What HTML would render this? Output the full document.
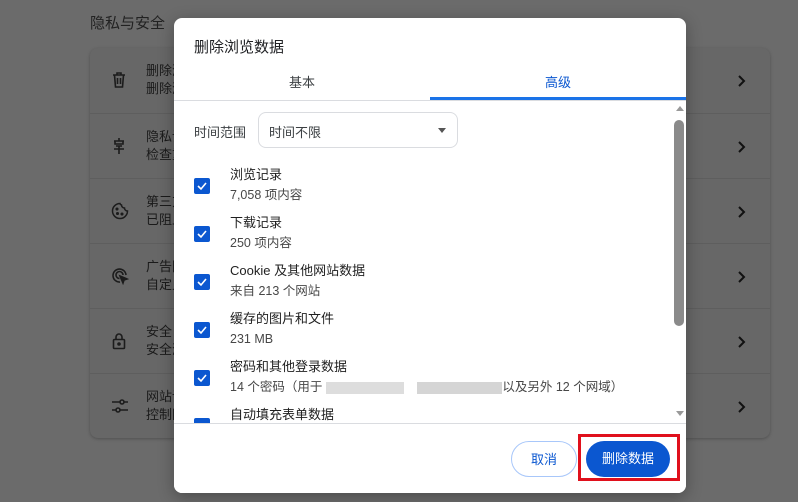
<!DOCTYPE html>
<html><head><meta charset="utf-8"><style>
*{margin:0;padding:0;box-sizing:border-box}
body{width:798px;height:502px;overflow:hidden;background:#6b6b6b;font-family:"Liberation Sans","Noto Sans CJK SC",sans-serif;position:relative}
.a{position:absolute}
.h{left:90px;top:12px;font-size:15px;color:#222}
.card{left:90px;top:48px;width:680px;height:390px;background:#676767;border-radius:8px;box-shadow:0 1px 3px rgba(0,0,0,.25)}
.row{position:absolute;left:0;width:680px;height:65px;border-top:1px solid #5e5e5e}
.row svg.ic{position:absolute;left:21px;top:23px}
.row .t{position:absolute;left:56px;top:14px;font-size:13px;color:#1a1a1a;line-height:18px}
.row svg.c{position:absolute;left:647px;top:27px}
.dlg{left:174px;top:18px;width:512px;height:475px;background:#fff;border-radius:8px;box-shadow:0 4px 16px rgba(0,0,0,.3);overflow:hidden}
.title{left:20px;top:18px;font-size:15px;color:#202124}
.tab{top:54px;font-size:13px;color:#3c4043;width:256px;text-align:center}
.ul{left:256px;top:79px;width:256px;height:3px;background:#1a73e8}
.sep{left:0;top:82px;width:512px;height:1px;background:#dadce0}
.lbl{left:20px;top:104px;font-size:13px;color:#3c4043}
.sel{left:84px;top:94px;width:200px;height:36px;border:1px solid #dadce0;border-radius:8px;font-size:13px;color:#3c4043;padding:9px 10px}
.sel:after{content:"";position:absolute;right:11px;top:15px;border:4px solid transparent;border-top:5px solid #555}
.cb{left:20px;width:16px;height:16px;background:#0b57d0;border-radius:2px}
.cb svg{position:absolute;left:2px;top:2px}
.it{left:56px;font-size:13px;color:#1f1f1f;line-height:20px}
.it span{color:#474747;font-size:12.5px}
.sb{left:500px;top:102px;width:10px;height:206px;background:#8a8a8a;border-radius:5px}
.bsep{left:0;top:405px;width:512px;height:1px;background:#dadce0}
.btn{top:423px;height:36px;border-radius:18px;font-size:13px;text-align:center;line-height:36px}
</style></head><body>
<div class="a h">隐私与安全</div>
<div class="a card">
<div class="row" style="top:0;border-top:none"><svg class="ic" width="16" height="18" fill="none" stroke="#1c1c1c" stroke-width="1.6"><path d="M2 4h12M6 4V2h4v2M3.5 4l1 12h7l1-12M6.5 7v6M9.5 7v6"/></svg><div class="t">删除浏<br>删除浏</div><svg class="c" width="10" height="12" fill="none" stroke="#111" stroke-width="2"><path d="M2 1l5 5-5 5"/></svg></div>
<div class="row" style="top:65px"><svg class="ic" width="16" height="18" fill="none" stroke="#1c1c1c" stroke-width="1.6"><path d="M8 1v3M3 4h10M4 4v3h8V4M5 9h6M3 12h10M8 9v8"/></svg><div class="t">隐私设<br>检查重</div><svg class="c" width="10" height="12" fill="none" stroke="#111" stroke-width="2"><path d="M2 1l5 5-5 5"/></svg></div>
<div class="row" style="top:130px"><svg class="ic" width="18" height="18" fill="none" stroke="#1c1c1c" stroke-width="1.5"><path d="M9 1.5a7.5 7.5 0 1 0 7.5 7.5 3 3 0 0 1-3-3 3 3 0 0 1-3-3 2 2 0 0 1-1.5-1.5z"/><circle cx="6" cy="7" r=".8" fill="#1c1c1c"/><circle cx="6.5" cy="11.5" r=".8" fill="#1c1c1c"/><circle cx="11" cy="12" r=".8" fill="#1c1c1c"/></svg><div class="t">第三方<br>已阻止</div><svg class="c" width="10" height="12" fill="none" stroke="#111" stroke-width="2"><path d="M2 1l5 5-5 5"/></svg></div>
<div class="row" style="top:195px"><svg class="ic" width="18" height="18" fill="none" stroke="#1c1c1c" stroke-width="1.6"><path d="M15 8a6.5 6.5 0 1 0-6 7"/><path d="M12 8a3.5 3.5 0 1 0-3.5 3.5"/><path d="M9 9l7 3-3 1-1 3z" fill="#1c1c1c"/></svg><div class="t">广告隐<br>自定义</div><svg class="c" width="10" height="12" fill="none" stroke="#111" stroke-width="2"><path d="M2 1l5 5-5 5"/></svg></div>
<div class="row" style="top:260px"><svg class="ic" width="16" height="18" fill="none" stroke="#1c1c1c" stroke-width="1.6"><rect x="2.5" y="7.5" width="11" height="9" rx="1"/><path d="M5 7.5V5a3 3 0 0 1 6 0v2.5"/><circle cx="8" cy="12" r="1" fill="#1c1c1c"/></svg><div class="t">安全<br>安全浏</div><svg class="c" width="10" height="12" fill="none" stroke="#111" stroke-width="2"><path d="M2 1l5 5-5 5"/></svg></div>
<div class="row" style="top:325px"><svg class="ic" width="18" height="18" fill="none" stroke="#1c1c1c" stroke-width="1.6"><path d="M1 5h8M13 5h4M1 13h4M9 13h8"/><circle cx="11" cy="5" r="2"/><circle cx="7" cy="13" r="2"/></svg><div class="t">网站设<br>控制网</div><svg class="c" width="10" height="12" fill="none" stroke="#111" stroke-width="2"><path d="M2 1l5 5-5 5"/></svg></div>
</div>
<div class="a dlg">
<div class="a title">删除浏览数据</div>
<div class="a tab" style="left:0">基本</div>
<div class="a tab" style="left:256px;color:#0b57d0">高级</div>
<div class="a sep"></div><div class="a ul"></div>
<div class="a" style="left:502px;top:88px;border:4px solid transparent;border-bottom:5px solid #999;border-top:none"></div>
<div class="a lbl">时间范围</div>
<div class="a sel">时间不限</div>
<div class="a cb" style="top:160px"><svg width="12" height="12"><path d="M2 6l3 3 5-6" stroke="#fff" stroke-width="1.6" fill="none"/></svg></div>
<div class="a it" style="top:147px">浏览记录<br><span>7,058 项内容</span></div>
<div class="a cb" style="top:208px"><svg width="12" height="12"><path d="M2 6l3 3 5-6" stroke="#fff" stroke-width="1.6" fill="none"/></svg></div>
<div class="a it" style="top:195px">下载记录<br><span>250 项内容</span></div>
<div class="a cb" style="top:256px"><svg width="12" height="12"><path d="M2 6l3 3 5-6" stroke="#fff" stroke-width="1.6" fill="none"/></svg></div>
<div class="a it" style="top:243px">Cookie 及其他网站数据<br><span>来自 213 个网站</span></div>
<div class="a cb" style="top:304px"><svg width="12" height="12"><path d="M2 6l3 3 5-6" stroke="#fff" stroke-width="1.6" fill="none"/></svg></div>
<div class="a it" style="top:291px">缓存的图片和文件<br><span>231 MB</span></div>
<div class="a cb" style="top:352px"><svg width="12" height="12"><path d="M2 6l3 3 5-6" stroke="#fff" stroke-width="1.6" fill="none"/></svg></div>
<div class="a it" style="top:339px">密码和其他登录数据<br><span>14 个密码（用于 <i style="display:inline-block;width:78px;height:12px;background:#ddd;vertical-align:middle"></i> <i style="display:inline-block;width:85px;height:12px;background:#d5d5d5;vertical-align:middle;margin-left:10px"></i>以及另外 12 个网域）</span></div>
<div class="a cb" style="top:400px"></div>
<div class="a it" style="top:387px">自动填充表单数据</div>
<div class="a sb"></div>
<div class="a" style="left:502px;top:393px;border:4px solid transparent;border-top:5px solid #999;border-bottom:none"></div>
<div class="a" style="left:0;top:406px;width:512px;height:70px;background:#fff"></div>
<div class="a bsep"></div>
<div class="a btn" style="left:337px;width:66px;border:1px solid #a8c7fa;color:#0b57d0">取消</div>
<div class="a btn" style="left:412px;width:84px;background:#0b57d0;color:#fff">删除数据</div>
</div>
<div class="a" style="left:578px;top:434px;width:102px;height:47px;border:3px solid #e0101c"></div>
</body></html>
